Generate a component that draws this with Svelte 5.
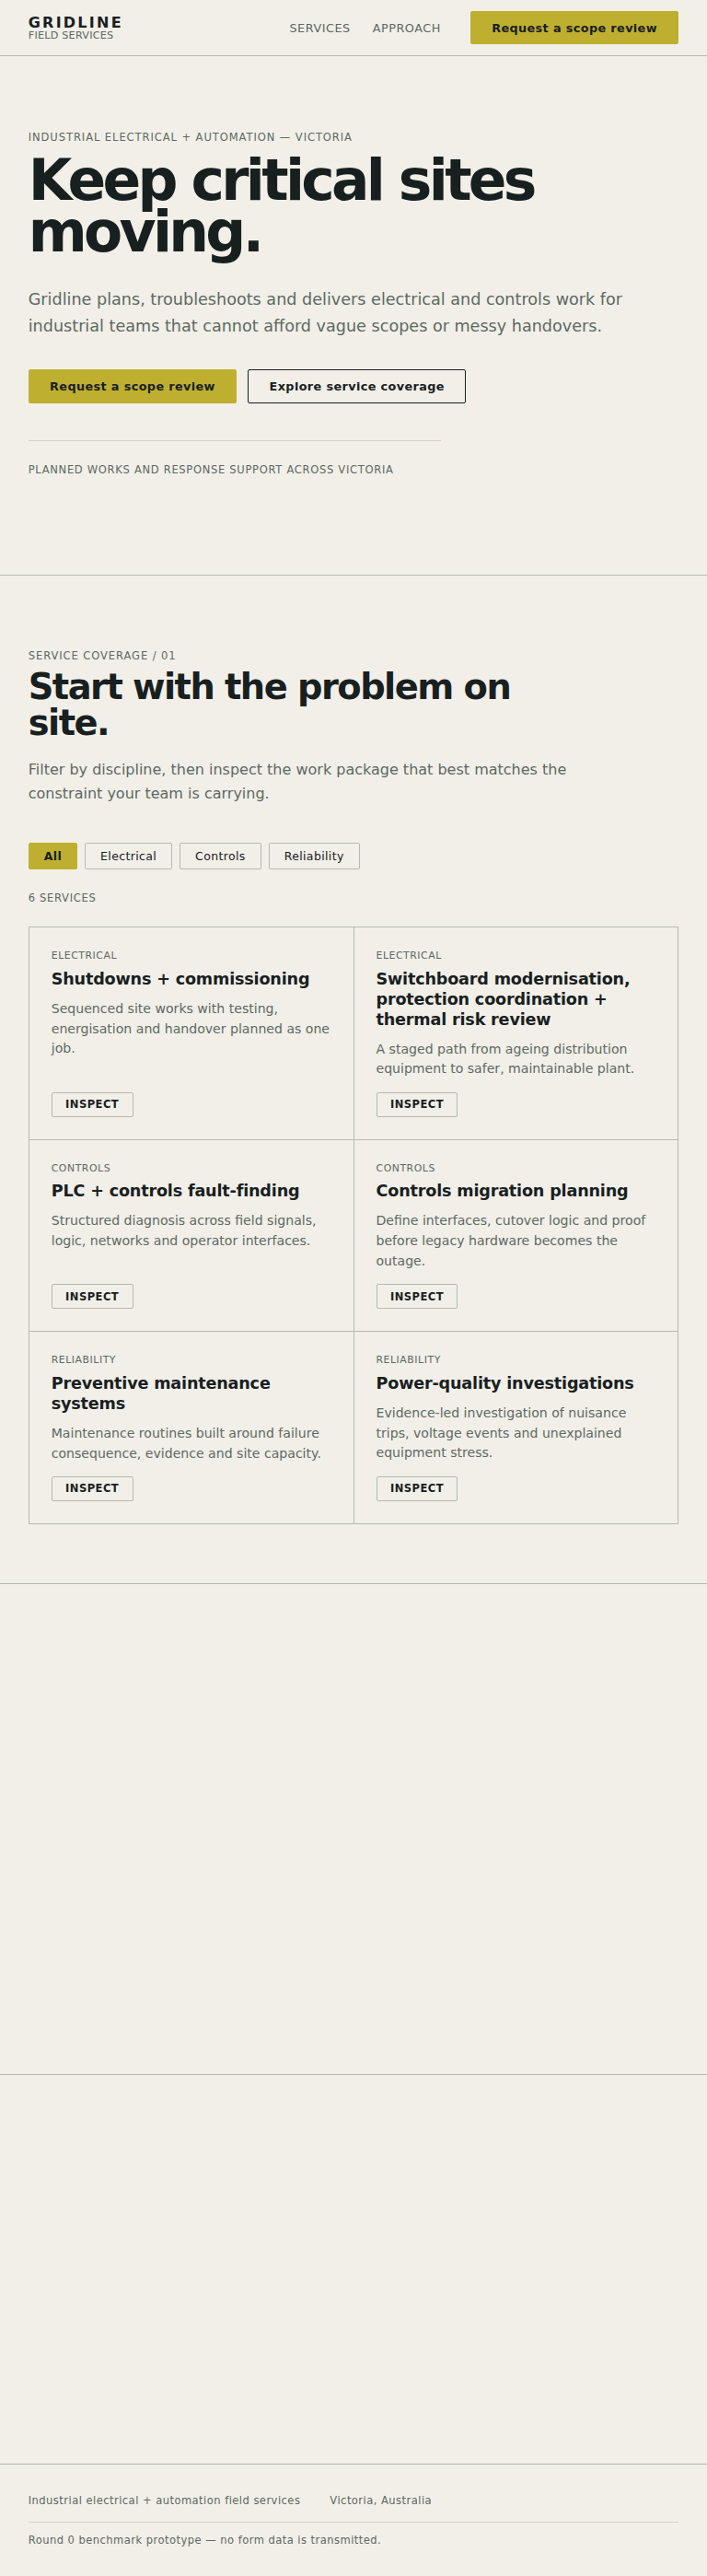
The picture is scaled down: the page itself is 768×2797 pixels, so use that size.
<script lang="ts">
  type Discipline = 'Electrical' | 'Controls' | 'Reliability';

  interface Service {
    discipline: Discipline;
    title: string;
    summary: string;
  }

  const filters = ['All', 'Electrical', 'Controls', 'Reliability'];

  const services: Service[] = [
    {
      discipline: 'Electrical',
      title: 'Shutdowns + commissioning',
      summary: 'Sequenced site works with testing, energisation and handover planned as one job.',
    },
    {
      discipline: 'Electrical',
      title: 'Switchboard modernisation, protection coordination + thermal risk review',
      summary: 'A staged path from ageing distribution equipment to safer, maintainable plant.',
    },
    {
      discipline: 'Controls',
      title: 'PLC + controls fault-finding',
      summary: 'Structured diagnosis across field signals, logic, networks and operator interfaces.',
    },
    {
      discipline: 'Controls',
      title: 'Controls migration planning',
      summary: 'Define interfaces, cutover logic and proof before legacy hardware becomes the outage.',
    },
    {
      discipline: 'Reliability',
      title: 'Preventive maintenance systems',
      summary: 'Maintenance routines built around failure consequence, evidence and site capacity.',
    },
    {
      discipline: 'Reliability',
      title: 'Power-quality investigations',
      summary: 'Evidence-led investigation of nuisance trips, voltage events and unexplained equipment stress.',
    },
  ];

  let active = $state('All');
  let visible = $derived(
    active === 'All' ? services : services.filter((s) => s.discipline === active)
  );
</script>

<div class="page">
  <header class="site-header">
    <a class="brand" href="#top">
      <strong>GRIDLINE</strong>
      <span>FIELD SERVICES</span>
    </a>
    <nav>
      <a href="#services">SERVICES</a>
      <a href="#approach">APPROACH</a>
    </nav>
    <a class="btn primary" href="#contact">Request a scope review</a>
  </header>

  <main>
    <section class="hero" id="top">
      <p class="eyebrow">INDUSTRIAL ELECTRICAL + AUTOMATION — VICTORIA</p>
      <h1>Keep critical sites moving.</h1>
      <p class="lead">
        Gridline plans, troubleshoots and delivers electrical and controls work for
        industrial teams that cannot afford vague scopes or messy handovers.
      </p>
      <div class="actions">
        <a class="btn primary" href="#contact">Request a scope review</a>
        <a class="btn outline" href="#services">Explore service coverage</a>
      </div>
      <p class="note">PLANNED WORKS AND RESPONSE SUPPORT ACROSS VICTORIA</p>
    </section>

    <section class="services" id="services">
      <p class="eyebrow">SERVICE COVERAGE / 01</p>
      <h2>Start with the problem on site.</h2>
      <p class="intro">
        Filter by discipline, then inspect the work package that best matches the
        constraint your team is carrying.
      </p>
      <div class="filters">
        {#each filters as filter}
          <button class="chip" class:active={active === filter} onclick={() => (active = filter)}>
            {filter}
          </button>
        {/each}
      </div>
      <p class="count">{visible.length} SERVICES</p>
      <div class="grid">
        {#each visible as service (service.title)}
          <article class="card">
            <p class="tag">{service.discipline}</p>
            <h3>{service.title}</h3>
            <p class="summary">{service.summary}</p>
            <button class="inspect">INSPECT</button>
          </article>
        {/each}
      </div>
    </section>

    <section class="approach" id="approach"></section>
    <section class="contact" id="contact"></section>
  </main>

  <footer>
    <div class="footer-row">
      <span>Industrial electrical + automation field services</span>
      <span>Victoria, Australia</span>
    </div>
    <p class="legal">Round 0 benchmark prototype — no form data is transmitted.</p>
  </footer>
</div>

<style>
  :global(body) {
    margin: 0;
    background: #f2efe8;
  }
  .page {
    --ink: #18201f;
    --muted: #5c6963;
    --line: #b5b9b4;
    --line-soft: #d1d4ce;
    --accent: #beaf31;
    --gutter: 4vw;
    color: var(--ink);
    background: #f2efe8;
    font-family: "DejaVu Sans", sans-serif;
    font-size: 16px;
    line-height: 1.6;
  }
  .page * { box-sizing: border-box; }
  p, h1, h2, h3 { margin: 0; }
  a { color: inherit; text-decoration: none; }
  button { font-family: inherit; color: inherit; cursor: pointer; }

  .site-header {
    display: flex;
    align-items: center;
    height: 61px;
    padding: 0.48px var(--gutter) 0;
    border-bottom: 1px solid var(--line);
  }
  .brand {
    display: flex;
    flex-direction: column;
    margin-right: auto;
    padding-top: 1.6px;
  }
  .brand strong {
    font-size: 16px;
    line-height: 16px;
    letter-spacing: 0.14em;
  }
  .brand span {
    font-size: 11.2px;
    line-height: 12px;
    letter-spacing: 0.02em;
    color: var(--muted);
  }
  nav {
    display: flex;
    gap: 24px;
    margin-right: 32px;
    font-size: 12.8px;
    line-height: 21px;
    letter-spacing: 0.04em;
    color: var(--muted);
  }

  .btn {
    display: inline-flex;
    align-items: center;
    height: 36.48px;
    padding: 0 22.4px;
    border: 1px solid var(--ink);
    border-radius: 2px;
    font-size: 12.8px;
    font-weight: 700;
    line-height: 21px;
    letter-spacing: 0.03em;
    white-space: nowrap;
  }
  .btn.primary {
    background: var(--accent);
    border-color: var(--accent);
  }

  section {
    border-bottom: 1px solid var(--line);
    padding: 80px var(--gutter) 64px;
  }
  .eyebrow, .note, .count {
    font-size: 11.52px;
    line-height: 16px;
    letter-spacing: 0.06em;
    color: var(--muted);
  }
  .eyebrow { letter-spacing: 0.08em; }

  .hero { height: 564px; }
  h1 {
    max-width: 600px;
    margin-top: 10.8px;
    font-size: 8vw;
    line-height: 0.92;
    letter-spacing: -0.06em;
  }
  .lead {
    max-width: 660px;
    margin-top: 30px;
    font-size: 17.6px;
    line-height: 1.65;
    color: var(--muted);
  }
  .actions {
    display: flex;
    gap: 12px;
    margin-top: 32.2px;
  }
  .note {
    width: 448px;
    margin-top: 40.4px;
    padding-top: 23px;
    border-top: 1px solid var(--line-soft);
  }

  .services {
    min-height: 1095px;
    padding-top: 79px;
  }
  h2 {
    max-width: 560px;
    margin-top: 6px;
    font-size: 5vw;
    line-height: 1.02;
    letter-spacing: -0.04em;
  }
  .intro {
    max-width: 608px;
    margin-top: 18.7px;
    line-height: 26px;
    color: var(--muted);
  }
  .filters {
    display: flex;
    gap: 8px;
    margin-top: 39.9px;
  }
  .chip {
    height: 29px;
    padding: 0 16px;
    border: 1px solid var(--line);
    border-radius: 2px;
    background: transparent;
    font-size: 12.48px;
    letter-spacing: 0.03em;
  }
  .chip.active {
    background: var(--accent);
    border-color: var(--accent);
    font-weight: 700;
  }
  .count { margin-top: 23px; }

  .grid {
    display: grid;
    grid-template-columns: 1fr 1fr;
    margin-top: 23.3px;
    border-top: 1px solid var(--line);
    border-left: 1px solid var(--line);
  }
  .card {
    display: flex;
    flex-direction: column;
    align-items: flex-start;
    padding: 24px;
    border-right: 1px solid var(--line);
    border-bottom: 1px solid var(--line);
  }
  .tag {
    font-size: 10.88px;
    line-height: 13.2px;
    letter-spacing: 0.05em;
    text-transform: uppercase;
    color: var(--muted);
  }
  h3 {
    margin-top: 8.2px;
    font-size: 17.6px;
    line-height: 1.25;
    letter-spacing: -0.01em;
  }
  .summary {
    margin: 10.1px 0 13.55px;
    font-size: 14.08px;
    line-height: 1.55;
    color: var(--muted);
  }
  .inspect {
    height: 27px;
    margin-top: auto;
    padding: 0 14.4px;
    border: 1px solid var(--line);
    border-radius: 2px;
    background: transparent;
    font-size: 11.52px;
    font-weight: 700;
    letter-spacing: 0.04em;
  }

  .approach { height: 533px; }
  .contact { height: 423px; }

  footer {
    height: 121px;
    padding: 30px var(--gutter) 0;
    font-size: 11.52px;
    line-height: 19.2px;
    letter-spacing: 0.04em;
    color: var(--muted);
  }
  .footer-row {
    display: flex;
    gap: 32px;
    padding-bottom: 12.8px;
    border-bottom: 1px solid var(--line-soft);
  }
  .legal { margin-top: 10px; }
</style>
